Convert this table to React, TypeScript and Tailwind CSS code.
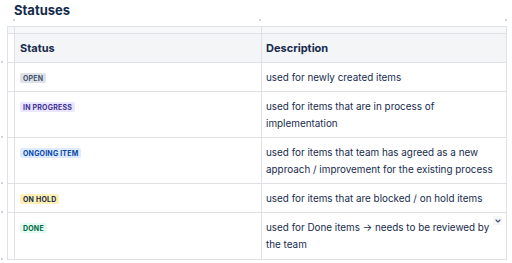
import React from "react";

type Row = { label: string; bg: string; fg: string; desc: string; h: string };

const rows: Row[] = [
  { label: "OPEN", bg: "bg-[#DFE1E6]", fg: "text-[#42526E]", desc: "used for newly created items", h: "h-[29px]" },
  { label: "IN PROGRESS", bg: "bg-[#EAE6FF]", fg: "text-[#403294]", desc: "used for items that are in process of implementation", h: "h-[46px]" },
  { label: "ONGOING ITEM", bg: "bg-[#DEEBFF]", fg: "text-[#0747A6]", desc: "used for items that team has agreed as a new approach / improvement for the existing process", h: "h-[46px]" },
  { label: "ON HOLD", bg: "bg-[#FFF0B3]", fg: "text-[#172B4D]", desc: "used for items that are blocked / on hold items", h: "h-[29px]" },
  { label: "DONE", bg: "bg-[#E3FCEF]", fg: "text-[#006644]", desc: "used for Done items \u2192 needs to be reviewed by the team", h: "h-[46px]" },
];

function Lozenge({ r }: { r: Row }) {
  return (
    <span className={`inline-flex items-center h-[10px] px-[3px] rounded-[2px] text-[7px] font-bold leading-none tracking-[0.2px] ${r.bg} ${r.fg}`} style={{ fontFamily: "Inter, sans-serif" }}>
      {r.label}
    </span>
  );
}

const Dot = () => <span className="block w-[2px] h-[2px] rounded-full bg-[#C1C7D0]" />;

export default function App() {
  return (
    <div className="relative w-[512px] h-[263px] bg-white overflow-hidden" style={{ fontFamily: "Roboto, 'Noto Sans', sans-serif" }}>
      <div className="pl-[14px] pt-[1px] h-[18px] text-[13px] leading-[18px] font-bold text-[#172B4D]" style={{ fontFamily: "Inter, sans-serif" }}>Statuses</div>
      <div className="h-[8px] pt-[1px] pl-[13px] w-[507px] flex justify-between">
        <Dot />
        <Dot />
        <Dot />
      </div>
      {/* row handle dots */}
      <span className="absolute left-[1px] top-[61px] w-[2px] h-[2px] rounded-full bg-[#C1C7D0]" />
      <span className="absolute left-[1px] top-[136px] w-[2px] h-[2px] rounded-full bg-[#C1C7D0]" />
      <span className="absolute left-[1px] top-[182px] w-[2px] h-[2px] rounded-full bg-[#C1C7D0]" />
      <span className="absolute left-[1px] top-[211px] w-[2px] h-[2px] rounded-full bg-[#C1C7D0]" />
      <span className="absolute left-[1px] top-[258px] w-[2px] h-[2px] rounded-full bg-[#C1C7D0]" />

      <div className="ml-[7px] w-[500px] border border-[#DFE1E6] text-[#172B4D]">
        <div className="flex h-[7px] border-b border-[#DFE1E6] bg-[#F7F8F9]">
          <div className="w-[7px] border-r border-[#DFE1E6]" />
          <div className="w-[247px] border-r border-[#DFE1E6]" />
          <div className="flex-1" />
        </div>
        <div className="flex h-[29px] border-b border-[#DFE1E6] bg-[#F4F5F7] text-[11px] font-bold" style={{ fontFamily: "Inter, sans-serif" }}>
          <div className="w-[7px] border-r border-[#DFE1E6] bg-white" />
          <div className="w-[247px] border-r border-[#DFE1E6] pl-[5px] flex items-center">Status</div>
          <div className="flex-1 pl-[4px] flex items-center">Description</div>
        </div>
        {rows.map((r, i) => (
          <div key={r.label} className={`flex ${r.h} ${i < rows.length - 1 ? "border-b" : ""} border-[#DFE1E6]`}>
            <div className="w-[7px] border-r border-[#DFE1E6]" />
            <div className="w-[247px] border-r border-[#DFE1E6] pl-[5px] pt-[10px] flex items-start leading-none">
              <Lozenge r={r} />
            </div>
            <div className="flex-1 flex items-start pl-[4px] pr-[4px] pt-[6px] gap-[2px]">
              <p className="flex-1 text-[10.5px] leading-[17px] text-[#172B4D]" style={{ fontFamily: "Inter, sans-serif", fontSize: "9.9px" }}>
                {r.desc}
              </p>
              {r.label === "DONE" && (
                <span className="mt-[-3px] w-[9px] h-[9px] rounded-[2px] bg-[#F4F5F7] flex items-center justify-center shrink-0">
                  <svg width="6" height="4" viewBox="0 0 6 4"><path d="M1 1l2 2 2-2" fill="none" stroke="#42526E" strokeWidth="1.1" strokeLinecap="round" strokeLinejoin="round" /></svg>
                </span>
              )}
            </div>
          </div>
        ))}
      </div>
    </div>
  );
}
